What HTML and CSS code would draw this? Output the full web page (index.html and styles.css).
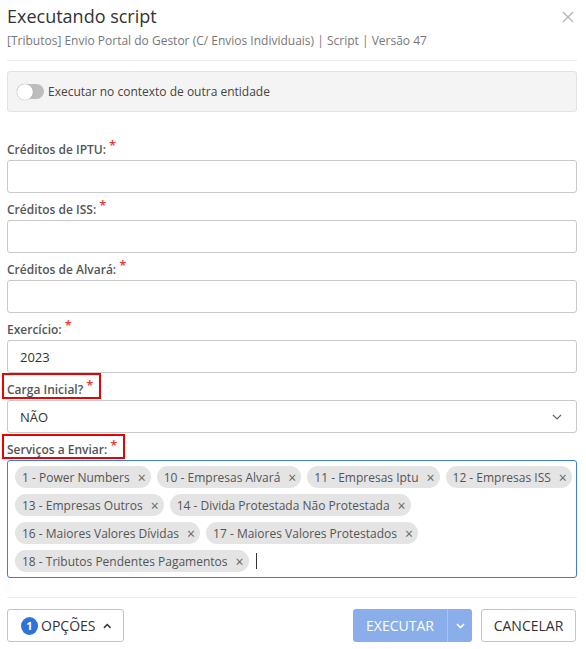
FILE: index.html
```html
<!DOCTYPE html>
<html lang="pt-BR">
<head>
<meta charset="utf-8">
<title>Executando script</title>
<link rel="stylesheet" href="styles.css">
</head>
<body>
<div class="modal">
  <div class="header">
    <div class="titles">
      <h1 class="title">Executando script</h1>
      <div class="subtitle">[Tributos] Envio Portal do Gestor (C/ Envios Individuais) | Script | Versão 47</div>
    </div>
    <button class="close" aria-label="Fechar">
      <svg width="12" height="12" viewBox="0 0 12 12"><path d="M1 1L11 11M11 1L1 11" stroke="#b5b5b5" stroke-width="1.4" fill="none"/></svg>
    </button>
  </div>
  <div class="divider"></div>

  <div class="context-box">
    <span class="toggle"><span class="knob"></span></span>
    <span class="context-label">Executar no contexto de outra entidade</span>
  </div>

  <div class="form">
    <div class="field">
      <label class="label">Créditos de IPTU:<sup class="req">*</sup></label>
      <div class="input"></div>
    </div>
    <div class="field">
      <label class="label">Créditos de ISS:<sup class="req">*</sup></label>
      <div class="input"></div>
    </div>
    <div class="field">
      <label class="label">Créditos de Alvará:<sup class="req">*</sup></label>
      <div class="input"></div>
    </div>
    <div class="field">
      <label class="label">Exercício:<sup class="req">*</sup></label>
      <div class="input">2023</div>
    </div>
    <div class="field">
      <label class="label"><span class="mark mark-first">Carga Inicial?<sup class="req">*</sup></span></label>
      <div class="input select">NÃO
        <svg class="chev" width="10" height="6" viewBox="0 0 10 6"><path d="M1 1L5 5L9 1" stroke="#666" stroke-width="1.2" fill="none"/></svg>
      </div>
    </div>
    <div class="field">
      <label class="label"><span class="mark">Serviços a Enviar:<sup class="req">*</sup></span></label>
      <div class="multi">
        <span class="chip">1 - Power Numbers<span class="x">×</span></span>
        <span class="chip">10 - Empresas Alvará<span class="x">×</span></span>
        <span class="chip">11 - Empresas Iptu<span class="x">×</span></span>
        <span class="chip">12 - Empresas ISS<span class="x">×</span></span>
        <span class="chip">13 - Empresas Outros<span class="x">×</span></span>
        <span class="chip">14 - Divida Protestada Não Protestada<span class="x">×</span></span>
        <span class="chip">16 - Maiores Valores Dívidas<span class="x">×</span></span>
        <span class="chip">17 - Maiores Valores Protestados<span class="x">×</span></span>
        <span class="chip">18 - Tributos Pendentes Pagamentos<span class="x">×</span></span>
        <span class="caret"></span>
      </div>
    </div>
  </div>

  <div class="divider footer-div"></div>
  <div class="footer">
    <button class="btn options"><span class="badge">1</span>OPÇÕES
      <svg width="9" height="6" viewBox="0 0 9 6"><path d="M1 5L4.5 1.5L8 5" stroke="#333" stroke-width="1.6" fill="none"/></svg>
    </button>
    <div class="actions">
      <div class="split">
        <button class="btn primary">EXECUTAR</button>
        <button class="btn primary caret-btn">
          <svg width="9" height="6" viewBox="0 0 9 6"><path d="M1 1L4.5 4.5L8 1" stroke="#fff" stroke-width="1.6" fill="none"/></svg>
        </button>
      </div>
      <button class="btn cancel">CANCELAR</button>
    </div>
  </div>
</div>
</body>
</html>
```
FILE: styles.css
```css
* { box-sizing: border-box; }
html, body { margin: 0; padding: 0; background: #fff; }
body { font-family: "Open Sans", "Noto Sans", sans-serif; color: #333; }

.modal { padding: 0 9px 0 7px; width: 586px; }

.header { display: flex; justify-content: space-between; align-items: flex-start; padding-top: 4px; }
.title { margin: 0; font-size: 18px; font-weight: 400; line-height: 24px; color: #333; }
.subtitle { font-size: 12px; line-height: 16px; color: #777; margin-top: 5px; }
.close { background: none; border: 0; padding: 0; margin: 7px 3px 0 0; cursor: pointer; line-height: 0; }

.divider { height: 1px; background: #ececec; margin-top: 11px; }

.context-box {
  margin-top: 10px; height: 41px; background: #f4f4f4; border: 1px solid #e2e2e2; border-radius: 3px;
  display: flex; align-items: center; padding-left: 9px; gap: 4px;
}
.toggle { width: 27px; height: 15px; border-radius: 8px; background: #bdbdbd; position: relative; display: inline-block; }
.knob { position: absolute; left: 0; top: -0.5px; width: 16px; height: 16px; border-radius: 50%; background: #fff; box-shadow: 0 0 1px rgba(0,0,0,.45); }
.context-label { font-size: 12px; color: #444; }

.form { margin-top: 21px; }
.field { display: flex; flex-direction: column; }
.label { font-size: 12px; font-weight: 600; color: #555; height: 21px; line-height: 21px; margin-top: 6px; }
.req { color: #e53935; font-size: 13px; vertical-align: 0; position: relative; top: -4px; margin-left: 3px; line-height: 0; }
.mark { display: inline-block; position: relative; height: 21px; vertical-align: top; }
.mark::before {
  content: ""; position: absolute; left: -5px; right: -8px; top: -5px; bottom: 1px;
  border: 2px solid #ee0000; pointer-events: none;
}
.mark-first::before { top: -6px; }

.input {
  height: 33px; border: 1px solid #c9c9c9; border-radius: 3px; padding: 0 12px;
  font-size: 13px; color: #333; display: flex; align-items: center;
}
.select { justify-content: space-between; padding-right: 14px; }

.multi {
  border: 1px solid #3c7fd8; border-radius: 3px; padding: 5px 4px 4px 7px;
  display: flex; flex-wrap: wrap; gap: 6px 6px; align-items: center; min-height: 118px; align-content: flex-start;
}
.chip {
  display: inline-flex; align-items: center; height: 22px; background: #e4e4e4; border-radius: 11px;
  padding: 0 5px 0 7px; font-size: 12px; color: #555; white-space: nowrap;
}
.chip .x { margin-left: 8px; font-size: 14px; color: #666; }
.caret { display: inline-block; width: 1px; height: 16px; background: #333; margin-left: 1px; }

.footer-div { margin-top: 19px; }
.footer { display: flex; justify-content: space-between; align-items: center; margin-top: 11px; }
.btn { font-family: inherit; font-size: 14px; height: 33px; border-radius: 3px; cursor: pointer; display: inline-flex; align-items: center; }
.options { background: #fff; border: 1px solid #c4c4c4; color: #333; padding: 0 12px 0 13px; width: 117px; gap: 0; }
.options svg { margin-left: 7px; }
.badge { width: 18px; height: 18px; border-radius: 50%; background: #2f73d9; color: #fff; font-size: 11px; font-weight: 700; display: inline-flex; align-items: center; justify-content: center; margin-right: 3px; }
.actions { display: flex; gap: 9px; margin-right: 1px; }
.split { display: flex; }
.primary { background: #8aaee9; border: 0; color: #fff; }
.split .primary:first-child { border-radius: 3px 0 0 3px; padding: 0; width: 94px; justify-content: center; }
.caret-btn { border-radius: 0 3px 3px 0 !important; border-left: 1px solid #a9c3ee !important; width: 25px; justify-content: center; padding: 0; }
.cancel { background: #fff; border: 1px solid #c4c4c4; color: #333; width: 95px; justify-content: center; padding: 0; }
```
